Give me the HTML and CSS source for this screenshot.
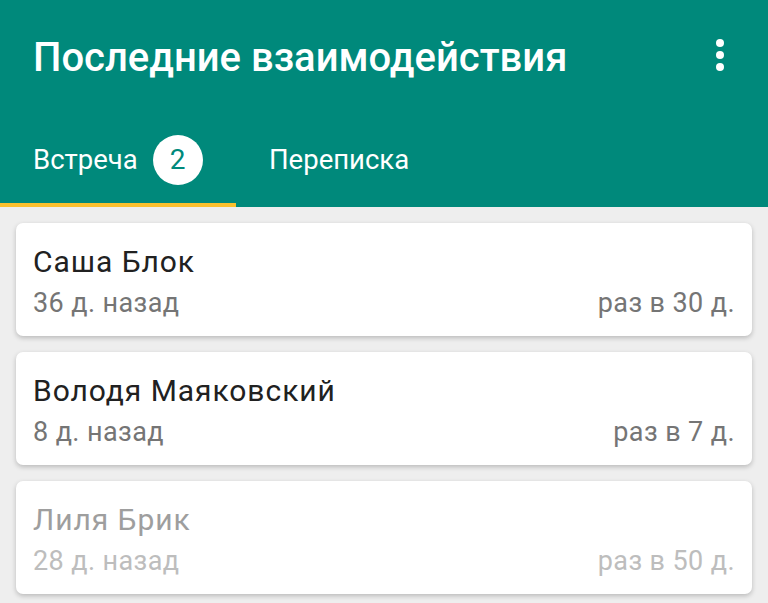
FILE: index.html
```html
<!DOCTYPE html>
<html lang="ru">
<head>
<meta charset="utf-8">
<link rel="stylesheet" href="styles.css">
</head>
<body>
<header class="appbar">
  <div class="toolbar">
    <h1 class="title">Последние взаимодействия</h1>
    <button class="menu" aria-label="menu">
      <svg width="8" height="32" viewBox="0 0 8 32"><circle cx="4" cy="4" r="4" fill="#fff"/><circle cx="4" cy="16" r="4" fill="#fff"/><circle cx="4" cy="28" r="4" fill="#fff"/></svg>
    </button>
  </div>
  <nav class="tabs">
    <div class="tab active"><span>Встреча</span><span class="badge">2</span></div>
    <div class="tab"><span>Переписка</span></div>
  </nav>
</header>
<main class="list">
  <div class="card">
    <div class="name">Саша Блок</div>
    <div class="meta"><span>36 д. назад</span><span>раз в 30 д.</span></div>
  </div>
  <div class="card">
    <div class="name">Володя Маяковский</div>
    <div class="meta"><span>8 д. назад</span><span>раз в 7 д.</span></div>
  </div>
  <div class="card muted">
    <div class="name">Лиля Брик</div>
    <div class="meta"><span>28 д. назад</span><span>раз в 50 д.</span></div>
  </div>
</main>
</body>
</html>
```
FILE: styles.css
```css
* { box-sizing: border-box; }
html, body { margin: 0; padding: 0; }
body {
  background: #eeeeee;
  font-family: Roboto, "Noto Sans", sans-serif;
  width: 768px;
  height: 603px;
  overflow: hidden;
}
.appbar {
  background: #00897b;
  color: #fff;
}
.toolbar {
  height: 112px;
  display: flex;
  align-items: center;
  justify-content: space-between;
  padding: 2px 44px 0 33px;
}
.title {
  margin: 0;
  font-size: 40px;
  font-weight: 500;
  letter-spacing: 0;
}
.menu {
  background: none;
  border: 0;
  padding: 0;
  display: flex;
  margin-top: -4px;
}
.tabs {
  height: 95px;
  display: flex;
}
.tab {
  display: flex;
  align-items: center;
  padding-left: 33px;
  font-size: 27.5px;
  font-weight: 400;
  border-bottom: 4px solid transparent;
  padding-top: 4px;
}
.tab.active {
  width: 236px;
  border-bottom-color: #fbc02d;
}
.badge {
  width: 50px;
  height: 50px;
  border-radius: 50%;
  background: #fff;
  color: #00897b;
  display: flex;
  align-items: center;
  justify-content: center;
  margin-left: 15px;
  font-size: 28px;
}
.list {
  padding: 16px 16px;
  display: flex;
  flex-direction: column;
  gap: 16px;
}
.card {
  background: #fff;
  border-radius: 7px;
  box-shadow: 0 2px 5px rgba(0,0,0,0.22);
  height: 113px;
  padding: 19px 17px 0 17px;
}
.name {
  font-size: 30px;
  line-height: 40px;
  letter-spacing: 0.95px;
  color: #212121;
}
.meta {
  display: flex;
  justify-content: space-between;
  font-size: 27px;
  line-height: 42px;
  letter-spacing: 0.4px;
  color: #757575;
}
.muted .name { color: #9e9e9e; }
.muted .meta { color: #bdbdbd; }
```
